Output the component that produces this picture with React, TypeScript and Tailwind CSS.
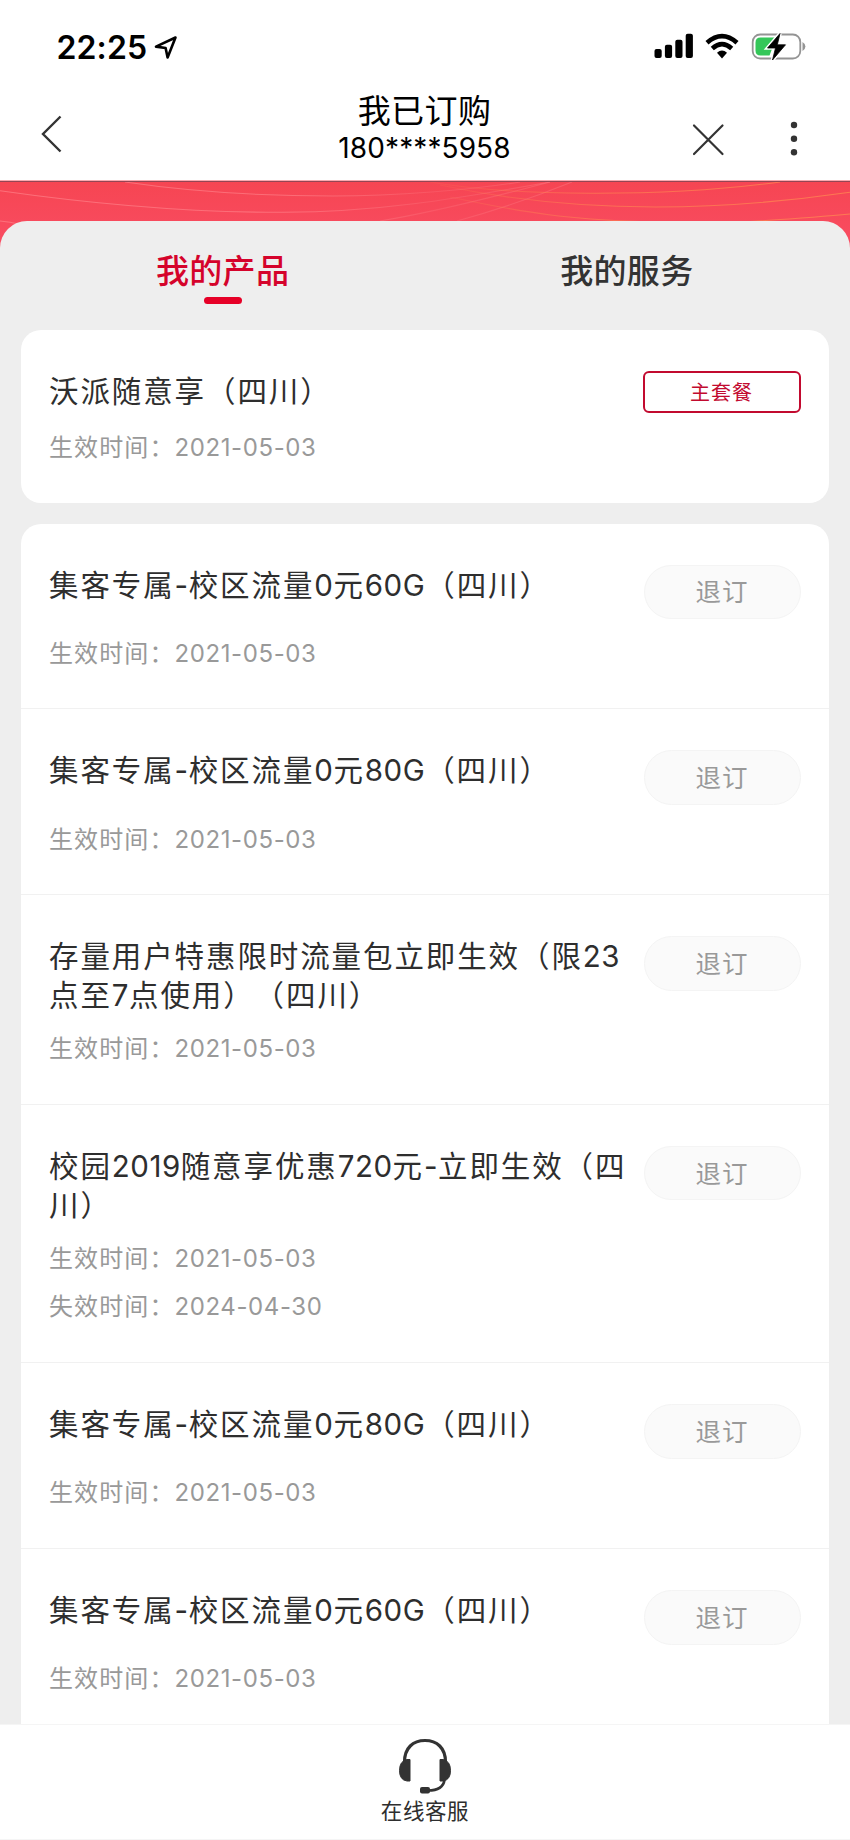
import React from "react";

const CJK = "font-['Noto_Sans_CJK_SC',sans-serif]";

/** Sets Latin runs in Inter and Chinese runs in the CJK face, each with its own tracking. */
function Mixed({ text, latin }: { text: string; latin: string }) {
  const runs = text.match(/[\x20-\x7e]+|[^\x20-\x7e]+/g) ?? [];
  return (
    <>
      {runs.map((run, i) =>
        /^[\x20-\x7e]/.test(run) ? (
          <span key={i} className={latin}>
            {run}
          </span>
        ) : (
          <span key={i}>{run}</span>
        )
      )}
    </>
  );
}

type Item = { lines: string[]; dates: [string, string][] };

const START: [string, string] = ["生效时间：", "2021-05-03"];
const END: [string, string] = ["失效时间：", "2024-04-30"];

const items: Item[] = [
  { lines: ["集客专属-校区流量0元60G（四川）"], dates: [START] },
  { lines: ["集客专属-校区流量0元80G（四川）"], dates: [START] },
  { lines: ["存量用户特惠限时流量包立即生效（限23", "点至7点使用）（四川）"], dates: [START] },
  { lines: ["校园2019随意享优惠720元-立即生效（四", "川）"], dates: [START, END] },
  { lines: ["集客专属-校区流量0元80G（四川）"], dates: [START] },
  { lines: ["集客专属-校区流量0元60G（四川）"], dates: [START] },
];

function Title({ lines }: { lines: string[] }) {
  return (
    <div className="-mt-px mb-px text-[29.5px] leading-[39px] tracking-[1.9px] text-[#2e2e2e]">
      {lines.map((line) => (
        <div key={line} className="h-[39px] whitespace-nowrap">
          <Mixed text={line} latin="font-['Inter',sans-serif] text-[29.5px] tracking-[0.5px]" />
        </div>
      ))}
    </div>
  );
}

function Dates({ dates }: { dates: [string, string][] }) {
  return (
    <div className="pt-[8.7px] text-[24px] leading-[48.7px] tracking-[1.1px] text-[#999]">
      {dates.map(([label, value]) => (
        <div key={label} className="h-[48.7px] whitespace-nowrap">
          <Mixed text={label + value} latin="font-['Inter',sans-serif] tracking-[0.6px]" />
        </div>
      ))}
    </div>
  );
}

function Row({ item, last }: { item: Item; last: boolean }) {
  return (
    <div className={last ? "px-[28.5px] pt-[41px] pb-[32px]" : "border-b border-[#f1f1f1] px-[28.5px] pt-[41px] pb-[32.1px]"}>
      <div className="flex items-start justify-between">
        <Title lines={item.lines} />
        <button className="-ml-4 flex h-[54.5px] w-[157px] shrink-0 items-center justify-center rounded-full border-[1.5px] border-[#f4f4f4] bg-[#fafafa] pb-[3px] text-[25.5px] tracking-[1px] text-[#999]">
          退订
        </button>
      </div>
      <Dates dates={item.dates} />
    </div>
  );
}

function StatusIcons() {
  return (
    <svg className="h-[32px] w-[156px]" viewBox="0 0 156 32" fill="#000">
      <rect x="1.500" y="19" width="7.2" height="9" rx="2" />
      <rect x="11.9" y="14.7" width="7.2" height="13.3" rx="2" />
      <rect x="22.3" y="9.7" width="7.2" height="18.3" rx="2" />
      <rect x="32.7" y="3.8" width="7.2" height="24.2" rx="2" />
      <g fill="none" stroke="#000" strokeWidth="4.6">
        <path d="M54 12.7 Q69 -0.500 84 12.7" />
        <path d="M59.3 18.500 Q69 9.7 78.7 18.500" />
      </g>
      <path d="M64 22.7 Q69 18.3 74 22.7 L69 28.500 Z" />
      <g transform="translate(-1 0.5)">
        <rect x="100.7" y="4" width="47.6" height="24" rx="7.5" fill="none" stroke="#949494" strokeWidth="1.8" />
        <path d="M150.5 11.5 Q153.4 13 153.4 16 T150.5 20.5 Z" fill="#949494" />
        <path d="M108.5 7 H123 L113.5 18.5 H120 L117.5 25 H108.5 Q103.5 25 103.5 20 V12 Q103.5 7 108.5 7Z" fill="#34c759" />
        <path d="M128 3 L115.5 17.5 H123.5 L120.5 29.500 L133.5 14.3 H125.3 L128 3Z" stroke="#fff" strokeWidth="3.5" />
        <path d="M128 3 L115.5 17.5 H123.5 L120.5 29.500 L133.5 14.3 H125.3 L128 3Z" strokeLinejoin="round" stroke="#000" strokeWidth="0.8" />
      </g>
    </svg>
  );
}

function Waves() {
  return (
    <svg className="h-[69px] w-full" viewBox="0 0 850 69" preserveAspectRatio="none" fill="none">
      <defs>
        <linearGradient id="band" x1="0" x2="0" y1="0" y2="1">
          <stop offset="0" stopColor="#f64552" />
          <stop offset="1" stopColor="#f94d63" />
        </linearGradient>
        <linearGradient id="pink" gradientUnits="userSpaceOnUse" x1="0" x2="580" y1="0" y2="0">
          <stop offset="0" stopColor="#ff8088" stopOpacity="0.7" />
          <stop offset="0.5" stopColor="#ff8088" stopOpacity="0.65" />
          <stop offset="0.75" stopColor="#ff8088" stopOpacity="0.25" />
          <stop offset="1" stopColor="#ff8088" stopOpacity="0.4" />
        </linearGradient>
        <linearGradient id="amber" gradientUnits="userSpaceOnUse" x1="430" x2="850" y1="0" y2="0">
          <stop offset="0" stopColor="#ff8550" stopOpacity="0.1" />
          <stop offset="0.4" stopColor="#ff8550" stopOpacity="0.6" />
          <stop offset="1" stopColor="#ff8550" stopOpacity="0.8" />
        </linearGradient>
      </defs>
      <rect width="850" height="69" fill="url(#band)" />
      <g stroke="url(#pink)" strokeWidth="1.1">
        <path d="M0 10.700 C100 25 190 32.500 283 32.300 S450 20 550 2" />
        <path d="M125 2 C200 13 270 16 333 16 S470 10 520 2" />
        <path d="M0 41 Q20 43 40 50" />
        <path d="M380 41 C430 33 490 18 550 2" />
        <path d="M457 41 Q515 25 572 2" />
      </g>
      <g stroke="url(#amber)" strokeWidth="1.1">
        <path d="M430 2 C510 16 660 18 780 2" />
        <path d="M440 5 C560 31 700 34 850 12.300" />
        <path d="M450 17 C530 34 570 39 640 41.500 M750 41.500 C790 39 820 37 850 34" />
      </g>
      <path d="M0 0.5H850" stroke="#f9a9b0" />
      <path d="M0 1.5H850" stroke="#944654" />
    </svg>
  );
}

export default function App() {
  return (
    <div className={`flex h-[1840px] w-[850px] flex-col overflow-hidden bg-[#eee] [text-spacing-trim:space-all] ${CJK}`}>
      <header className="flex h-[180px] shrink-0 flex-col bg-white">
        <div className="flex h-[92px] shrink-0 items-center justify-between pr-[41px] pl-[56.5px]">
          <div className="flex items-center gap-[8px] pt-[3px]">
            <span className="font-['Inter',sans-serif] text-[32px] leading-none font-semibold tracking-[0.1px] text-black">22:25</span>
            <svg className="-ml-px h-[24px] w-[24px]" viewBox="0 0 24 24" fill="none" stroke="#000" strokeWidth="2.6" strokeLinejoin="round">
              <path d="M21.5 1.500 L2 10.6 L11.6 12 L13.6 21.5 Z" />
            </svg>
          </div>
          <StatusIcons />
        </div>
        <div className="flex h-[88px] justify-between pr-[45px] pl-[40px]">
          <svg className="mt-[22px] h-[40px] w-[150px]" viewBox="0 0 150 40" fill="none" stroke="#333" strokeWidth="2.4">
            <path d="M20.5 2.5 L3 20 L20.5 37.5" />
          </svg>
          <div className="-mt-[1px] flex w-[300px] flex-col items-center pl-[4px] text-black">
            <h1 className="text-[33px] leading-[37px] tracking-[0.4px]">我已订购</h1>
            <p className="pt-[2px] font-['Inter',sans-serif] text-[28px] leading-[37px] tracking-[0.1px]">180****5958</p>
          </div>
          <svg className="mt-[28px] h-[40px] w-[150px]" viewBox="0 0 150 40">
            <path d="M39 5.5 L67.5 34 M67.5 5.5 L39 34" fill="none" stroke="#333" strokeWidth="2.2" strokeLinecap="round" />
            <g fill="#333">
              <circle cx="139" cy="5" r="3.2" />
              <circle cx="139" cy="18.7" r="3.2" />
              <circle cx="139" cy="32.3" r="3.2" />
            </g>
          </svg>
        </div>
      </header>

      <div className="h-[69px] shrink-0">
        <Waves />
      </div>

      <main className="relative -mt-[28px] flex min-h-0 flex-1 flex-col overflow-hidden rounded-t-[27px] bg-[#eee] pr-[21px] pl-[20.5px]">
        <nav className="grid h-[108.500px] shrink-0 grid-cols-2 text-[33px] leading-[50px] font-medium tracking-[0.3px]">
          <div className="flex flex-col items-center pt-[23px] text-[#d5032b]">
            <span>我的产品</span>
            <span className="mt-[3px] h-[7px] w-[38px] rounded-full bg-[#e60027]" />
          </div>
          <div className="flex flex-col items-center pt-[23px] text-[#333]">
            <span>我的服务</span>
          </div>
        </nav>

        <section className="h-[173px] shrink-0 rounded-[20px] bg-white px-[28.5px] pt-[41px]">
          <div className="flex h-[42.5px] items-start justify-between">
            <Title lines={["沃派随意享（四川）"]} />
            <div className="flex h-[42.5px] w-[158px] items-center justify-center rounded-[6px] border-2 border-[#c20a2f] text-[20px] tracking-[1px] text-[#c20a2f]">
              主套餐
            </div>
          </div>
          <Dates dates={[START]} />
        </section>

        <section className="mt-[21px] shrink-0 rounded-t-[20px] bg-white">
          {items.map((item, i) => (
            <Row key={i} item={item} last={i === items.length - 1} />
          ))}
        </section>
      </main>

      <footer className="flex h-[116px] shrink-0 flex-col items-center border-y border-[#f5f5f5] bg-white pt-[13px] text-[#2e2e2e]">
        <svg className="h-[56px] w-[54px]" viewBox="0 0 54 56" fill="none">
          <path d="M6.5 24 C6.5 10 15 2.5 27 2.5 S47.500 10 47.500 24" stroke="#333" strokeWidth="3.2" />
          <path d="M12 21.500 V43 H9 Q1.500 42 1.500 32.500 T9 21.500Z" fill="#333" stroke="#333" strokeLinejoin="round" />
          <path d="M42 21.500 V43 H45 Q52.500 42 52.500 32.500 T45 21.500Z" fill="#333" stroke="#333" strokeLinejoin="round" />
          <path d="M46.500 42 Q45 52.500 30 52.500" stroke="#333" strokeWidth="2.600" />
          <rect x="22" y="49" width="10" height="6.500" rx="2" fill="#333" />
        </svg>
        <span className="text-[21.5px] leading-[32px] tracking-[0.6px]">在线客服</span>
      </footer>
    </div>
  );
}
